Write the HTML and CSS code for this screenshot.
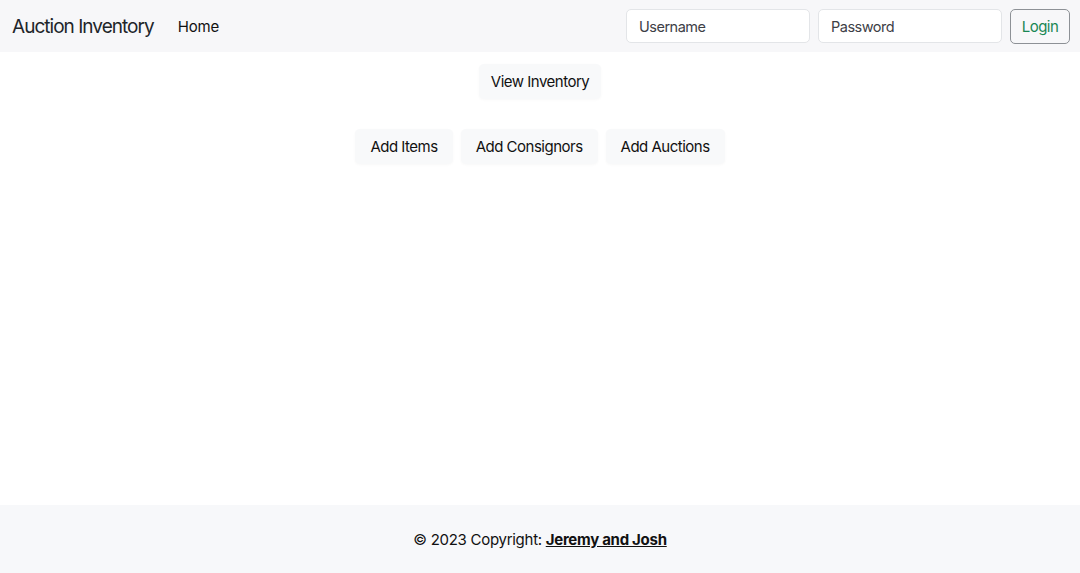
FILE: index.html
```html
<!DOCTYPE html>
<html lang="en">
<head>
<meta charset="utf-8">
<title>Auction Inventory</title>
<link rel="stylesheet" href="styles.css">
</head>
<body>
<nav class="navbar">
  <div class="nav-left">
    <a class="brand" href="#">Auction Inventory</a>
    <a class="nav-link" href="#">Home</a>
  </div>
  <form class="login-form">
    <input class="field" type="text" placeholder="Username">
    <input class="field" type="password" placeholder="Password">
    <button class="btn-login" type="button">Login</button>
  </form>
</nav>
<main class="main">
  <div class="row">
    <button class="btn-light" type="button">View Inventory</button>
  </div>
  <div class="row">
    <button class="btn-light btn-wide" type="button">Add Items</button>
    <button class="btn-light btn-wide" type="button">Add Consignors</button>
    <button class="btn-light btn-wide" type="button">Add Auctions</button>
  </div>
</main>
<footer class="footer">
  <span>© 2023 Copyright: <a class="footer-link" href="#">Jeremy and Josh</a></span>
</footer>
</body>
</html>
```

FILE: styles.css
```css
* { box-sizing: border-box; }
html, body { height: 100%; }
body {
  margin: 0;
  font-family: Inter, "Noto Sans", "Liberation Sans", sans-serif;
  font-size: 16px;
  color: #212529;
  background: #fff;
  display: flex;
  flex-direction: column;
  min-height: 100vh;
}
.navbar {
  height: 52px;
  background: #f7f7f9;
  display: flex;
  align-items: center;
  justify-content: space-between;
  padding: 0 10px 0 12px;
}
.nav-left { display: flex; align-items: center; }
.brand {
  font-size: 19px;
  color: #212529;
  text-decoration: none;
  margin-right: 24px;
  letter-spacing: -0.97px;
}
.nav-link {
  font-size: 15px;
  color: #111;
  text-decoration: none;
  letter-spacing: -0.2px;
}
.login-form { display: flex; align-items: center; gap: 8px; }
.field {
  width: 184px;
  height: 34px;
  border: 1px solid #e3e5e8;
  border-radius: 5px;
  background: #fff;
  padding: 0 12px;
  font-family: inherit;
  font-size: 14.5px;
  letter-spacing: -0.5px;
  color: #212529;
}
.field::placeholder { color: #3d4046; }
.btn-login {
  height: 35px;
  width: 60px;
  border: 1px solid #8d9196;
  border-radius: 5px;
  background: #f7f7f9;
  color: #198754;
  font-family: inherit;
  font-size: 15px;
  letter-spacing: -0.5px;
  padding: 0;
}
.main {
  flex: 1;
  display: flex;
  flex-direction: column;
  align-items: center;
  gap: 30px;
  padding-top: 12px;
}
.row { display: flex; gap: 8px; justify-content: center; }
.btn-light {
  height: 35px;
  padding: 0 12px;
  border: none;
  border-radius: 5px;
  background: #f8f9fa;
  box-shadow: 0 1px 3px rgba(0,0,0,0.03);
  color: #111;
  font-family: inherit;
  font-size: 15px;
  letter-spacing: -0.5px;
}
.btn-wide { padding: 0 15px; }
.footer {
  height: 68px;
  background: #f7f8fa;
  display: flex;
  align-items: center;
  justify-content: center;
  font-size: 15px;
  letter-spacing: -0.28px;
  color: #111;
}
.footer-link {
  color: #111;
  font-weight: 700;
  text-decoration: underline;
}
```
